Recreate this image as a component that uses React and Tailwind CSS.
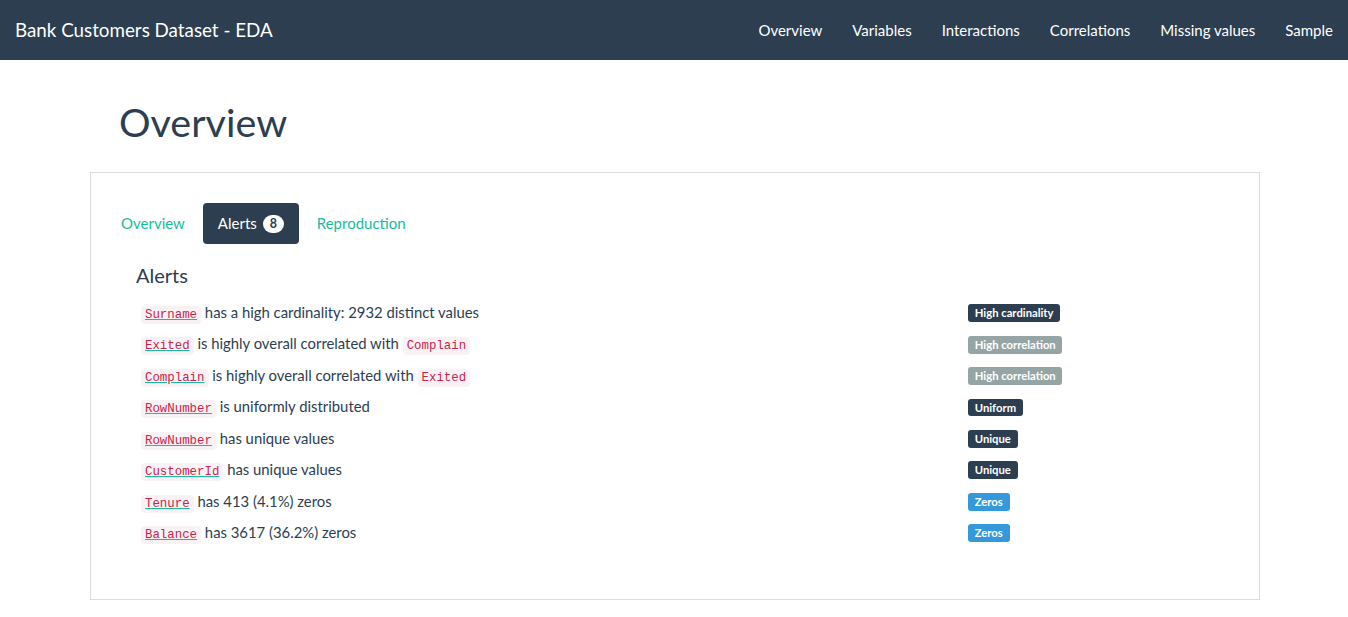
import React from "react";

const navLinks = ["Overview", "Variables", "Interactions", "Correlations", "Missing values", "Sample"];

const alerts = [
  { parts: [{ code: "Surname", link: true }, " has a high cardinality: 2932 distinct values"], label: "High cardinality", color: "bg-[#2c3e50]" },
  { parts: [{ code: "Exited", link: true }, " is highly overall correlated with ", { code: "Complain" }], label: "High correlation", color: "bg-[#95a5a6]" },
  { parts: [{ code: "Complain", link: true }, " is highly overall correlated with ", { code: "Exited" }], label: "High correlation", color: "bg-[#95a5a6]" },
  { parts: [{ code: "RowNumber", link: true }, " is uniformly distributed"], label: "Uniform", color: "bg-[#2c3e50]" },
  { parts: [{ code: "RowNumber", link: true }, " has unique values"], label: "Unique", color: "bg-[#2c3e50]" },
  { parts: [{ code: "CustomerId", link: true }, " has unique values"], label: "Unique", color: "bg-[#2c3e50]" },
  { parts: [{ code: "Tenure", link: true }, " has 413 (4.1%) zeros"], label: "Zeros", color: "bg-[#3498db]" },
  { parts: [{ code: "Balance", link: true }, " has 3617 (36.2%) zeros"], label: "Zeros", color: "bg-[#3498db]" },
];

const Code = ({ children }) => (
  <code className="font-['Liberation_Mono',monospace] text-[12.4px] leading-[16px] text-[#c7254e] bg-[#f9f2f4] px-[4px] py-[2px] rounded-[4px]">
    {children}
  </code>
);

export default function App() {
  return (
    <div className="min-h-screen bg-white font-['Lato',sans-serif] text-[#2c3e50] text-[15px]">
      <nav className="h-[60px] bg-[#2c3e50] flex items-center justify-between">
        <a className="pl-[15px] text-[18.8px] text-white">Bank Customers Dataset - EDA</a>
        <ul className="flex">
          {navLinks.map((l) => (
            <li key={l} className="px-[15px] text-[15px] text-white">
              {l}
            </li>
          ))}
        </ul>
      </nav>

      <div className="w-[1170px] ml-[90px]">
        <h1 className="mt-[40px] pl-[29px] text-[39.5px] leading-[43px] text-[#2c3e50]">Overview</h1>

        <div className="mt-[29px] border border-[#dddddd] px-[15px] pt-[30px] pb-[51px]">
          <ul className="flex gap-[3px]">
            <li className="px-[15px] py-[10px] leading-[21px] text-[#18bc9c] rounded-[4px]">Overview</li>
            <li className="px-[15px] py-[10px] leading-[21px] text-white bg-[#2c3e50] rounded-[4px] flex items-center">
              Alerts
              <span className="ml-[6px] inline-block min-w-[21px] text-center bg-white text-[#2c3e50] text-[12.5px] font-bold leading-[12px] px-[6px] py-[3px] rounded-[10px]">
                8
              </span>
            </li>
            <li className="px-[15px] py-[10px] leading-[21px] text-[#18bc9c] rounded-[4px]">Reproduction</li>
          </ul>

          <div className="ml-[30px] mt-[20px]">
            <h4 className="text-[20px] leading-[22px]">Alerts</h4>
            <div className="mt-[11px] w-[1093px]">
              {alerts.map((a, i) => (
                <div key={i} className="flex py-[5px]">
                  <div className="w-[827px] px-[5px] h-[21.43px] leading-[21.43px] text-[14.85px] whitespace-nowrap">
                    {a.parts.map((p, j) =>
                      typeof p === "string" ? (
                        <span key={j}>{p}</span>
                      ) : p.link ? (
                        <a key={j} className="underline decoration-[#18bc9c] text-[#18bc9c]">
                          <Code>{p.code}</Code>
                        </a>
                      ) : (
                        <Code key={j}>{p.code}</Code>
                      )
                    )}
                  </div>
                  <div className="px-[5px] h-[21.43px] flex items-center pt-[1px]">
                    <span className={`${a.color} block text-white text-[11.25px] font-bold leading-[11.25px] pt-[3px] pb-[3.5px] px-[6.75px] rounded-[3px]`}>
                      {a.label}
                    </span>
                  </div>
                </div>
              ))}
            </div>
          </div>
        </div>
      </div>
    </div>
  );
}
